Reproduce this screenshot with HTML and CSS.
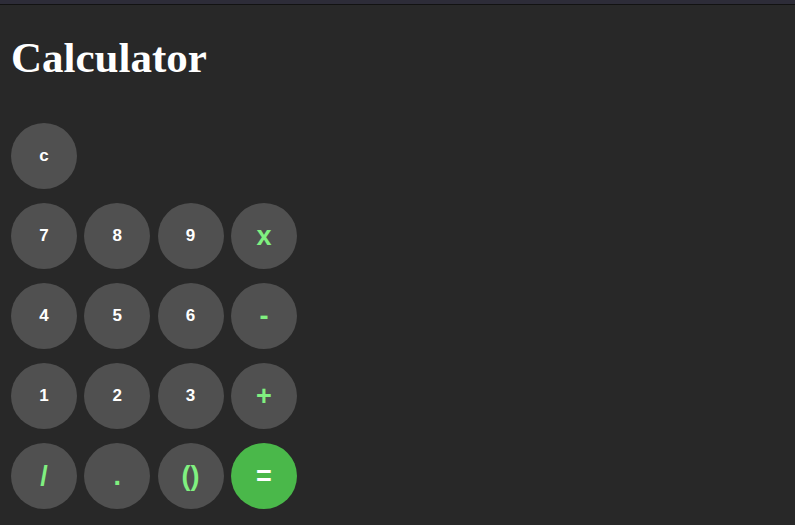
FILE: index.html
```html
<!DOCTYPE html>
<html>
<head>
<meta charset="utf-8">
<link rel="stylesheet" href="styles.css">
</head>
<body>
<div class="topbar"></div>
<main class="app">
  <h1 class="title">Calculator</h1>
  <div class="keys">
    <button class="key">c</button>
    <span></span><span></span><span></span>
    <button class="key">7</button>
    <button class="key">8</button>
    <button class="key">9</button>
    <button class="key op">x</button>
    <button class="key">4</button>
    <button class="key">5</button>
    <button class="key">6</button>
    <button class="key op">-</button>
    <button class="key">1</button>
    <button class="key">2</button>
    <button class="key">3</button>
    <button class="key op">+</button>
    <button class="key op">/</button>
    <button class="key op">.</button>
    <button class="key op">()</button>
    <button class="key eq">=</button>
  </div>
</main>
</body>
</html>
```
FILE: styles.css
```css
html, body {
  margin: 0;
  padding: 0;
  background: #282828;
  height: 100%;
  overflow: hidden;
}
.topbar {
  height: 4px;
  background: #2d2c38;
  border-bottom: 1px solid #121212;
}
.app {
  padding: 0 11px;
}
.title {
  margin: 0;
  padding-top: 23px;
  height: 90px;
  box-sizing: border-box;
  font-family: "Liberation Serif", serif;
  font-weight: bold;
  font-size: 43px;
  line-height: 60px;
  color: #ffffff;
}
.keys {
  margin-top: 28px;
  display: grid;
  grid-template-columns: repeat(4, 66px);
  column-gap: 7.3px;
  row-gap: 14px;
}
.key {
  width: 66px;
  height: 66px;
  border: none;
  border-radius: 50%;
  background: #505050;
  color: #ffffff;
  font-family: "Liberation Sans", Arial, sans-serif;
  font-weight: bold;
  font-size: 17px;
  padding: 0;
}
.key.op {
  color: #80f080;
  font-size: 27px;
}
.key.eq {
  background: #4ab84a;
  color: #ffffff;
  font-size: 27px;
}
```
